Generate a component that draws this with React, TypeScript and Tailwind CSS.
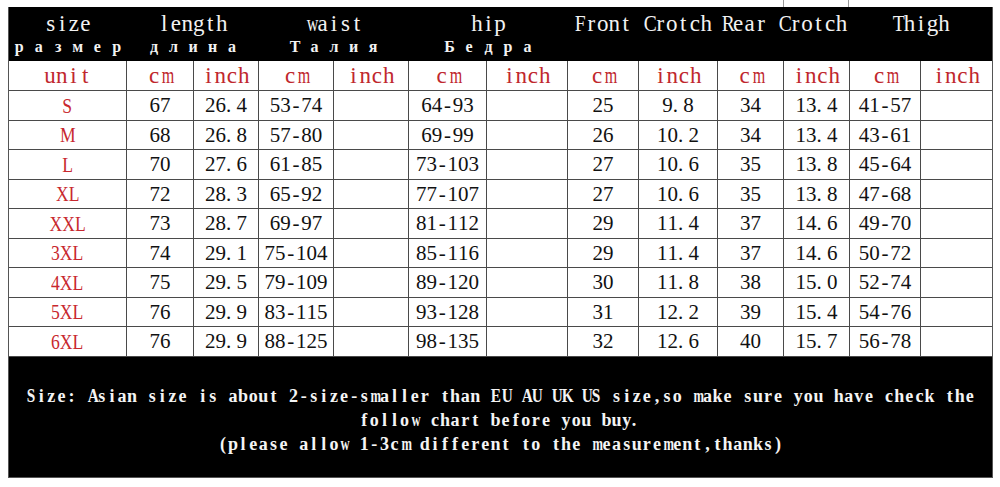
import clsx from "clsx";

// 13 columns: unit | length cm/inch | waist cm/inch | hip cm/inch | front cm/inch | rear cm/inch | thigh cm/inch
const COLS =
  "grid grid-cols-[118px_67px_65px_75px_75px_78px_81px_71px_79px_66px_66px_71px_1fr]";

const HEAD = [
  { top: "size", sub: "размер", span: "col-span-1" },
  { top: "length", sub: "длина", span: "col-span-2" },
  { top: "waist", sub: "Талия", span: "col-span-2" },
  { top: "hip", sub: "Бедра", span: "col-span-2" },
  { top: "Front Crotch", sub: "", span: "col-span-2" },
  { top: "Rear Crotch", sub: "", span: "col-span-2" },
  { top: "Thigh", sub: "", span: "col-span-2" },
];

const UNITS = ["unit", "cm", "inch", "cm", "inch", "cm", "inch", "cm", "inch", "cm", "inch", "cm", "inch"];

const ROWS = [
  ["S", "67", "26.4", "53-74", "", "64-93", "", "25", "9.8", "34", "13.4", "41-57", ""],
  ["M", "68", "26.8", "57-80", "", "69-99", "", "26", "10.2", "34", "13.4", "43-61", ""],
  ["L", "70", "27.6", "61-85", "", "73-103", "", "27", "10.6", "35", "13.8", "45-64", ""],
  ["XL", "72", "28.3", "65-92", "", "77-107", "", "27", "10.6", "35", "13.8", "47-68", ""],
  ["XXL", "73", "28.7", "69-97", "", "81-112", "", "29", "11.4", "37", "14.6", "49-70", ""],
  ["3XL", "74", "29.1", "75-104", "", "85-116", "", "29", "11.4", "37", "14.6", "50-72", ""],
  ["4XL", "75", "29.5", "79-109", "", "89-120", "", "30", "11.8", "38", "15.0", "52-74", ""],
  ["5XL", "76", "29.9", "83-115", "", "93-128", "", "31", "12.2", "39", "15.4", "54-76", ""],
  ["6XL", "76", "29.9", "88-125", "", "98-135", "", "32", "12.6", "40", "15.7", "56-78", ""],
];

/** Half-width "SimSun-like" text: every glyph sits in a fixed cell. */
function Mono({ text, cell }: { text: string; cell: string }) {
  return (
    <span className="whitespace-nowrap">
      {Array.from(text).map((ch, i) => (
        <span
          key={i}
          className={clsx(
            "inline-block",
            cell,
            ch === "." ? "text-left" : "text-center",
            /[mwMW]/.test(ch) && "scale-x-70",
            /[A-LN-VX-Z]/.test(ch) && "scale-x-85"
          )}
        >
          {ch === " " ? "\u00a0" : ch}
        </span>
      ))}
    </span>
  );
}

export default function App() {
  return (
    <div className="bg-white w-[1000px] h-[487px] pl-[8px] font-['Liberation_Serif',serif]">
      {/* stray column lines above the header */}
      <div className={clsx(COLS, "w-[985px] h-[7px]")}>
        <div className="col-start-11 border-x border-[#9a9a9a]" />
      </div>

      <div className="w-[985px] border-x border-b border-[#555]">
        {/* black title band */}
        <div className={clsx(COLS, "bg-black h-[54px] text-[#f2f2f2]")}>
          {HEAD.map((h) => (
            <div key={h.top} className={clsx(h.span, "flex flex-col items-center pt-[4px]")}>
              <div className="h-[26px] leading-[26px] text-[23px]">
                <Mono text={h.top} cell="w-[11.5px]" />
              </div>
              <div className="h-[20px] leading-[20px] text-[16px] font-bold">
                <Mono text={h.sub} cell="w-[19.5px]" />
              </div>
            </div>
          ))}
        </div>

        {/* unit row */}
        <div className={clsx(COLS, "h-[30px] text-[#c0272d] text-[23px]")}>
          {UNITS.map((u, i) => (
            <div
              key={i}
              className={clsx(
                "flex items-center justify-center border-b border-[#4a4a4a] leading-none",
                i < 12 && "border-r"
              )}
            >
              <Mono text={u} cell="w-[11.75px]" />
            </div>
          ))}
        </div>

        {/* size rows */}
        {ROWS.map((row, r) => (
          <div key={row[0]} className={clsx(COLS, r % 2 === 0 ? "h-[30px]" : "h-[29px]")}>
            {row.map((v, i) => (
              <div
                key={i}
                className={clsx(
                  "flex items-center justify-center border-b border-[#4a4a4a] leading-none",
                  i < 12 && "border-r"
                )}
              >
                {i === 0 ? (
                  <span className="inline-block scale-x-80 text-[22px] text-[#c8282e]">{v}</span>
                ) : (
                  <span className="text-[21px] text-[#111]">
                    <Mono text={v} cell="w-[10.5px]" />
                  </span>
                )}
              </div>
            ))}
          </div>
        ))}

        {/* note band */}
        <div className="bg-black h-[120px] flex flex-col items-center pt-[27px] text-[18px] leading-[24px] font-bold text-[#f4f4f4]">
          <Mono
            text="Size: Asian size is about 2-size-smaller than EU AU UK US size,so make sure you have check the"
            cell="w-[10.1px]"
          />
          <Mono text="follow chart before you buy." cell="w-[10.1px]" />
          <Mono text="(please allow 1-3cm different to the measurement,thanks)" cell="w-[10.1px]" />
        </div>
      </div>
    </div>
  );
}
